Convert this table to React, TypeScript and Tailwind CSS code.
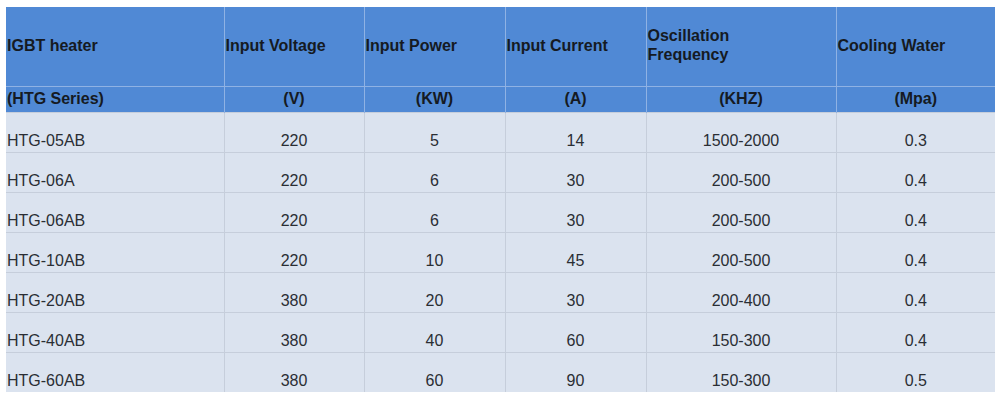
const rows = [
  ["HTG-05AB", "220", "5", "14", "1500-2000", "0.3"],
  ["HTG-06A", "220", "6", "30", "200-500", "0.4"],
  ["HTG-06AB", "220", "6", "30", "200-500", "0.4"],
  ["HTG-10AB", "220", "10", "45", "200-500", "0.4"],
  ["HTG-20AB", "380", "20", "30", "200-400", "0.4"],
  ["HTG-40AB", "380", "40", "60", "150-300", "0.4"],
  ["HTG-60AB", "380", "60", "90", "150-300", "0.5"],
];

const widths = ["w-[218px]", "w-[140px]", "w-[141px]", "w-[141px]", "w-[190px]", "w-[159px]"];

export default function App() {
  return (
    <div className="w-[1000px] h-[400px] bg-white pt-[7px] pl-[6px]" style={{ fontFamily: '"Liberation Sans", Arial, sans-serif' }}>
      <table className="table-fixed border-collapse w-[989px] text-[16px]">
        <colgroup>
          {widths.map((w, i) => (
            <col key={i} className={w} />
          ))}
        </colgroup>
        <thead>
          <tr className="h-[79px] bg-[#5089d5] text-[#151a22] font-bold">
            <th className="text-left align-middle px-[1px] pb-[2px] leading-[19px] border-r border-[#8fb2e4]">IGBT heater</th>
            <th className="text-left align-middle px-[1px] pb-[2px] leading-[19px] border-r border-[#8fb2e4]">Input Voltage</th>
            <th className="text-left align-middle px-[1px] pb-[2px] leading-[19px] border-r border-[#8fb2e4]">Input Power</th>
            <th className="text-left align-middle px-[1px] pb-[2px] leading-[19px] border-r border-[#8fb2e4]">Input Current</th>
            <th className="text-left align-middle px-[1px] pb-[2px] leading-[19px] border-r border-[#8fb2e4]">
              Oscillation
              <br />
              Frequency
            </th>
            <th className="text-left align-middle px-[1px] pb-[2px] leading-[19px]">Cooling Water</th>
          </tr>
          <tr className="h-[26px] bg-[#5089d5] text-[#151a22] font-bold border-t border-[#8fb2e4]">
            <th className="text-left px-[1px] border-r border-[#8fb2e4]">(HTG Series)</th>
            <th className="text-center border-r border-[#8fb2e4]">(V)</th>
            <th className="text-center border-r border-[#8fb2e4]">(KW)</th>
            <th className="text-center border-r border-[#8fb2e4]">(A)</th>
            <th className="text-center border-r border-[#8fb2e4]">(KHZ)</th>
            <th className="text-center">(Mpa)</th>
          </tr>
        </thead>
        <tbody className="bg-[#dbe3ef] text-[#2a2e34]">
          {rows.map((r, i) => (
            <tr key={i} className="h-[40px] border-t border-[#c6cedb]">
              {r.map((c, j) => (
                <td
                  key={j}
                  className={`align-bottom pb-[2px] leading-[18px] ${j === 0 ? "text-left px-[1px]" : "text-center"} ${j < 5 ? "border-r border-[#c6cedb]" : ""}`}
                >
                  {c}
                </td>
              ))}
            </tr>
          ))}
        </tbody>
      </table>
    </div>
  );
}
